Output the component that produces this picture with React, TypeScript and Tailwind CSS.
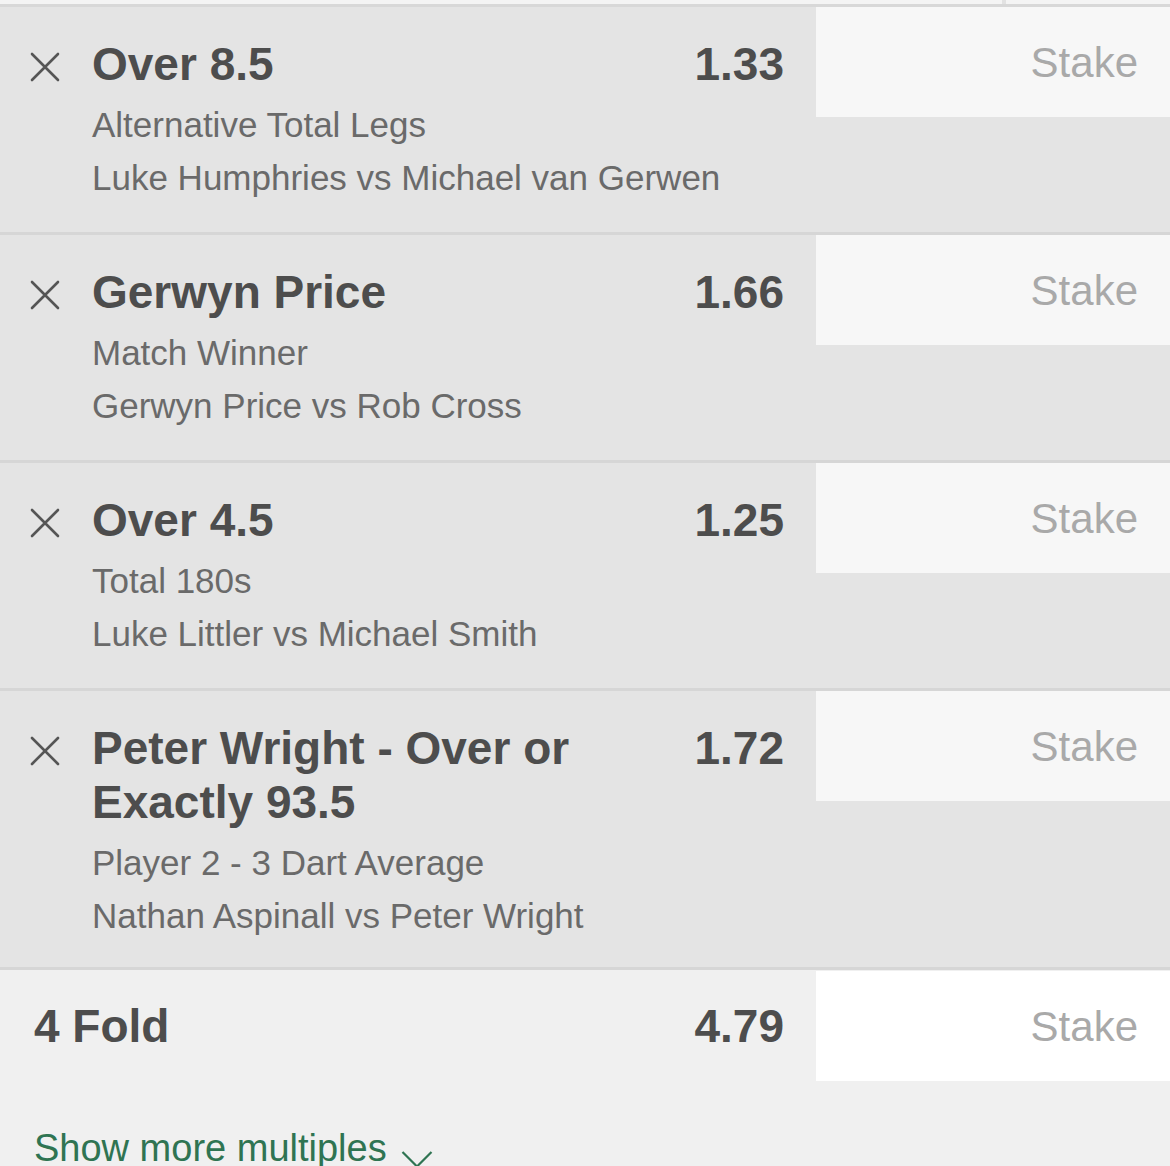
import React from 'react';

type Selection = {
  id: number;
  title: string;
  market: string;
  event: string;
  odds: string;
};

const selections: Selection[] = [
  { id: 1, title: 'Over 8.5', market: 'Alternative Total Legs', event: 'Luke Humphries vs Michael van Gerwen', odds: '1.33' },
  { id: 2, title: 'Gerwyn Price', market: 'Match Winner', event: 'Gerwyn Price vs Rob Cross', odds: '1.66' },
  { id: 3, title: 'Over 4.5', market: 'Total 180s', event: 'Luke Littler vs Michael Smith', odds: '1.25' },
  { id: 4, title: 'Peter Wright - Over or Exactly 93.5', market: 'Player 2 - 3 Dart Average', event: 'Nathan Aspinall vs Peter Wright', odds: '1.72' },
];

const CloseIcon = () => (
  <svg width="30" height="30" viewBox="0 0 30 30" fill="none" stroke="#555555" strokeWidth="2.6" strokeLinecap="round">
    <path d="M2 2 L28 28 M28 2 L2 28" />
  </svg>
);

const StakeBox = ({ white }: { white?: boolean }) => (
  <div
    className={`w-[354px] h-[110px] shrink-0 flex items-center justify-end pr-[32px] text-[42px] text-[#a9a9a9] ${
      white ? 'bg-white' : 'bg-[#f7f7f7]'
    }`}
  >
    Stake
  </div>
);

const SelectionRow = ({ s, last }: { s: Selection; last?: boolean }) => (
  <div className="flex bg-[#e4e4e4] border-b-[3px] border-[#d6d6d6]">
    <div className={`flex-1 flex pt-[30px] pr-[32px] ${last ? 'pb-[25px]' : 'pb-[28px]'}`}>
      <div className="w-[92px] shrink-0 pl-[30px] pt-[15px]">
        <CloseIcon />
      </div>
      <div className="flex-1 min-w-0">
        <div className="flex items-start justify-between gap-[24px]">
          <div className="text-[46px] leading-[54px] font-bold text-[#4d4d4d]">{s.title}</div>
          <div className="text-[46px] leading-[54px] font-bold text-[#4d4d4d]">{s.odds}</div>
        </div>
        <div className="mt-[7px] text-[35px] leading-[53px] text-[#6a6a6a]">
          <div>{s.market}</div>
          <div>{s.event}</div>
        </div>
      </div>
    </div>
    <StakeBox />
  </div>
);

export default function App() {
  return (
    <div className="w-[1170px] h-[1166px] overflow-hidden bg-[#f0f0f0]" style={{ fontFamily: '"Liberation Sans", Arial, sans-serif' }}>
      {/* tail of the section above */}
      <div className="flex h-[4px] bg-[#f4f4f4]">
        <div className="w-[1002px]" />
        <div className="w-[4px] bg-[#e2e2e2]" />
      </div>
      <div className="h-[3px] bg-[#d8d8d8]" />

      {selections.map((s, i) => (
        <SelectionRow key={s.id} s={s} last={i === selections.length - 1} />
      ))}

      {/* accumulator */}
      <div className="bg-[#f0f0f0]">
        <div className="flex pt-[1px]">
          <div className="flex-1 flex items-center justify-between pl-[34px] pr-[32px] text-[46px] font-bold text-[#4d4d4d]">
            <span>4 Fold</span>
            <span>4.79</span>
          </div>
          <StakeBox white />
        </div>
        <div className="mt-[45px] pl-[34px] flex items-end gap-[14px] text-[38px] leading-[44px] text-[#2f7452]">
          <span>Show more multiples</span>
          <svg width="32" height="18" viewBox="0 0 32 18" fill="none" stroke="#2f7452" strokeWidth="2.2" className="mb-[2px]">
            <path d="M1.5 2 L16 16.5 L30.5 2" />
          </svg>
        </div>
      </div>
    </div>
  );
}
